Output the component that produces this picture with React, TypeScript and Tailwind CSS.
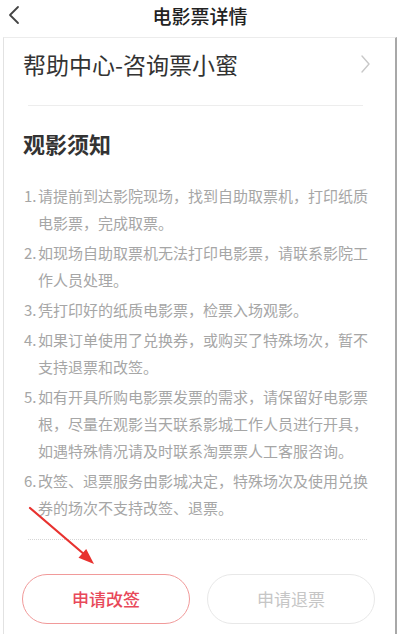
const NOTICE: string[][] = [
  ["请提前到达影院现场，找到自助取票机，打印纸质", "电影票，完成取票。"],
  ["如现场自助取票机无法打印电影票，请联系影院工", "作人员处理。"],
  ["凭打印好的纸质电影票，检票入场观影。"],
  ["如果订单使用了兑换券，或购买了特殊场次，暂不", "支持退票和改签。"],
  [
    "如有开具所购电影票发票的需求，请保留好电影票",
    "根，尽量在观影当天联系影城工作人员进行开具，",
    "如遇特殊情况请及时联系淘票票人工客服咨询。",
  ],
  ["改签、退票服务由影城决定，特殊场次及使用兑换", "券的场次不支持改签、退票。"],
];

function ChevronLeft() {
  return (
    <svg width="14" height="20" viewBox="0 0 14 20" fill="none">
      <path d="M11 2 L3 10 L11 18" stroke="#444" strokeWidth="1.8" strokeLinecap="round" strokeLinejoin="round" />
    </svg>
  );
}

function ChevronRight() {
  return (
    <svg width="12" height="20" viewBox="0 0 12 20" fill="none">
      <path d="M3 2 L10 10 L3 18" stroke="#c8c8c8" strokeWidth="1.4" strokeLinecap="round" strokeLinejoin="round" />
    </svg>
  );
}

/** Flèche rouge d'annotation posée sur la capture. */
function RedArrow() {
  return (
    <svg className="pointer-events-none absolute left-0 top-0" width="400" height="639" viewBox="0 0 400 639">
      <line x1="30" y1="508" x2="85" y2="555" stroke="#e8322f" strokeWidth="2.2" strokeLinecap="round" />
      <polygon points="94,564 78.5,557.8 86.2,549" fill="#e8322f" />
    </svg>
  );
}

export default function App() {
  return (
    <div
      className="relative h-[639px] w-[400px] overflow-hidden bg-white"
      style={{ fontFamily: '"Noto Sans CJK SC", "Noto Sans", sans-serif' }}
    >
      <header className="relative flex h-[31px] items-center justify-center">
        <span className="absolute left-[7px] top-[5px]">
          <ChevronLeft />
        </span>
        <h1 className="text-[19px] font-medium leading-none text-[#222]">电影票详情</h1>
      </header>

      <div className="mx-[3px] mt-[6px] border-l border-t border-l-[#e2e2e2] border-t-[#ececec] border-r-2 border-r-[#a8a8a8] pb-[10px]">
        <div className="flex items-center justify-between pl-[19px] pr-[24px] pt-[11px] pb-[26px]">
          <span className="text-[23px] leading-[30px] text-[#333]">帮助中心-咨询票小蜜</span>
          <ChevronRight />
        </div>
        <div className="ml-[24px] mr-[32px] h-px bg-[#ededed]" />

        <h2 className="mt-[22px] pl-[19px] text-[22px] font-bold leading-[30px] text-[#333]">观影须知</h2>

        <ol className="mt-[24px] flex flex-col gap-[3px] pl-[20px] pr-[20px] text-[15px] leading-[27px] text-[#a6a6a6]">
          {NOTICE.map((lines, i) => (
            <li key={i} className="flex">
              <span className="w-[14px] shrink-0 whitespace-nowrap">{i + 1}.</span>
              <div className="flex flex-col whitespace-nowrap">
                {lines.map((line) => (
                  <span key={line}>{line}</span>
                ))}
              </div>
            </li>
          ))}
        </ol>

        <div className="ml-[24px] mr-[28px] mt-[18px] border-t border-dotted border-[#d6d6d6]" />

        <div className="mt-[34px] flex gap-[17px] pl-[18px] pr-[20px]">
          <button
            type="button"
            className="flex h-[50px] w-[168px] items-center justify-center rounded-full border-[1.5px] border-[#f19a9a] text-[17px] font-medium text-[#e8495a]"
          >
            申请改签
          </button>
          <button
            type="button"
            className="flex h-[50px] w-[168px] items-center justify-center rounded-full border-[1.5px] border-[#e8e8e8] text-[17px] text-[#c6c6c6]"
          >
            申请退票
          </button>
        </div>
      </div>

      <RedArrow />
    </div>
  );
}
